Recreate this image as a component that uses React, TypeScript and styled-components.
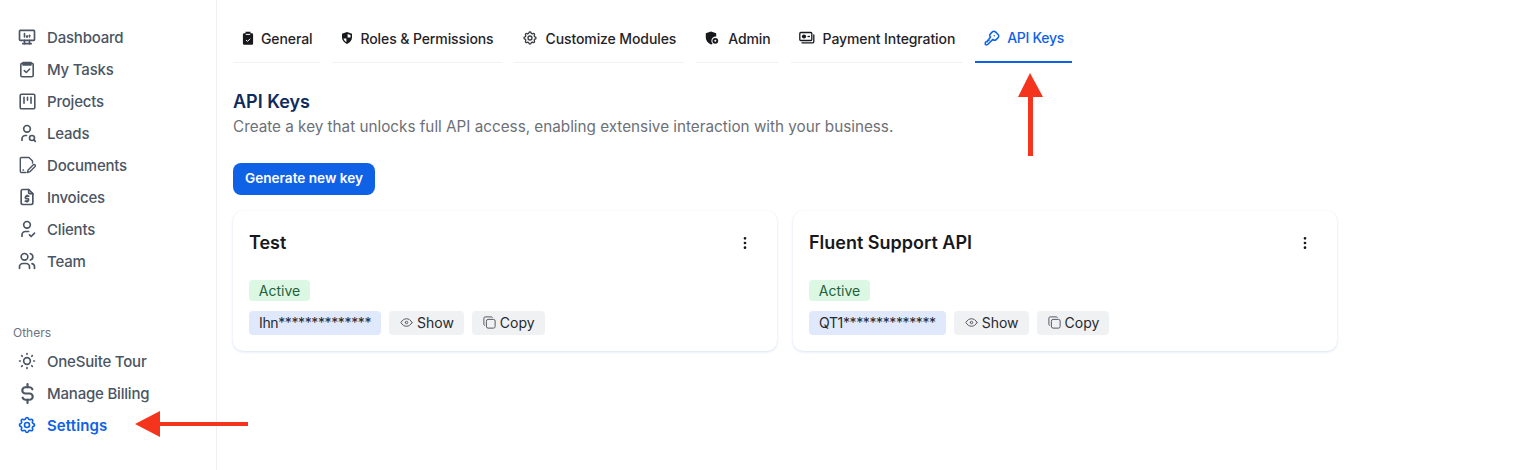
import React from "react";
import styled, { createGlobalStyle } from "styled-components";
import {
  TbDeviceDesktopAnalytics, TbUserSearch, TbFileDollar, TbUserCheck, TbUsers,
  TbSun, TbCurrencyDollar, TbSettings, TbKey, TbEye, TbCopy, TbDotsVertical,
} from "react-icons/tb";

const Global = createGlobalStyle`
  html, body { margin: 0; padding: 0; background: #fff; }
  body { font-family: Inter, "Liberation Sans", sans-serif; -webkit-font-smoothing: antialiased; }
  * { box-sizing: border-box; }
`;

const Page = styled.div`
  position: relative;
  display: flex;
  width: 1518px;
  height: 470px;
  overflow: hidden;
  background: #fff;
`;

const Sidebar = styled.aside`
  width: 217px;
  flex: none;
  border-right: 1px solid #eef0f3;
  padding: 21px 0 0 13px;
  display: flex;
  flex-direction: column;
`;

const NavItem = styled.div<{ $active?: boolean }>`
  height: 32px;
  display: flex;
  align-items: center;
  gap: 10px;
  padding-left: 4px;
  font-size: 15px;
  font-weight: ${(p) => (p.$active ? 600 : 500)};
  letter-spacing: ${(p) => (p.$active ? "0.1px" : "-0.2px")};
  color: ${(p) => (p.$active ? "#0f62e6" : "#4b5563")};
`;

const NavIcon = styled.span`
  width: 20px;
  height: 20px;
  display: flex;
  align-items: center;
  justify-content: center;
  flex: none;
  svg { display: block; flex: none; }
`;

const SectionLabel = styled.div`
  margin-top: 48px;
  height: 16px;
  line-height: 16px;
  margin-bottom: 4px;
  font-size: 12px;
  color: #6b7280;
`;

const Main = styled.main`
  flex: 1;
  padding: 14px 0 0 16px;
`;

const Tabs = styled.div`
  display: flex;
  gap: 12px;
`;

const Tab = styled.div<{ $active?: boolean; $gap: number }>`
  height: 49px;
  display: flex;
  align-items: center;
  gap: ${(p) => p.$gap}px;
  padding: 0 8px;
  font-size: 14px;
  font-weight: 500;
  letter-spacing: ${(p) => (p.$active ? "-0.3px" : "-0.1px")};
  white-space: nowrap;
  color: ${(p) => (p.$active ? "#0f62e6" : "#1f2328")};
  border-bottom: ${(p) => (p.$active ? "2px solid #0f62e6" : "1px solid #f1f2f4")};
  svg { display: block; flex: none; }
`;

const Title = styled.h1`
  margin: 26px 0 0;
  font-size: 18px;
  line-height: 25px;
  font-weight: 600;
  color: #0f2b5b;
`;

const Subtitle = styled.p`
  margin: 0;
  font-size: 15.25px;
  line-height: 25px;
  color: #6d7077;
`;

const PrimaryButton = styled.button`
  display: block;
  margin-top: 24px;
  width: 142px;
  height: 32px;
  border: 0;
  border-radius: 8px;
  background: #0f62e6;
  color: #fff;
  font: 600 13.6px Inter, sans-serif;
  padding: 0 0 2px;
`;

const Cards = styled.div`
  display: flex;
  gap: 16px;
  margin-top: 16px;
`;

const Card = styled.section`
  width: 544px;
  height: 140px;
  padding: 16px;
  border-radius: 10px;
  background: #fff;
  box-shadow: 0 1px 3px rgba(30, 80, 180, 0.16), 0 0 1px rgba(30, 80, 180, 0.06);
`;

const CardHeader = styled.div`
  display: flex;
  align-items: center;
  justify-content: space-between;
  height: 32px;
  color: #18191c;
  svg { display: block; margin-right: 8px; }
`;

const CardTitle = styled.h2`
  margin: 0 0 2px;
  font-size: 18px;
  font-weight: 600;
  color: #18191c;
`;

const Badge = styled.span`
  display: block;
  margin-top: 21px;
  width: 61px;
  height: 21px;
  border-radius: 4px;
  background: #dcf8e5;
  color: #22633b;
  font-size: 14px;
  line-height: 21px;
  text-align: center;
`;

const KeyRow = styled.div`
  display: flex;
  gap: 8px;
  margin-top: 10px;
`;

const Chip = styled.span<{ $key?: boolean }>`
  height: 24px;
  display: inline-flex;
  align-items: center;
  gap: 3px;
  padding: 0 10px 1px;
  border-radius: 4px;
  font-size: 14px;
  letter-spacing: ${(p) => (p.$key ? "-0.38px" : "-0.02px")};
  color: #26292f;
  white-space: nowrap;
  background: ${(p) => (p.$key ? "#e0e8fb" : "#f0f1f3")};
  svg { display: block; flex: none; color: #555b64; }
`;

const Arrow = styled.svg`
  position: absolute;
  pointer-events: none;
`;

const S = { fill: "none", stroke: "currentColor", strokeLinecap: "round" as const, strokeLinejoin: "round" as const };

const TaskIcon = () => (
  <svg width="16" height="17" viewBox="0 0 16 17" {...S} strokeWidth={1.6}>
    <rect x="1.8" y="2.2" width="12.4" height="13.6" rx="1.5" />
    <path d="M4 1.500h8v2.400H4z" fill="currentColor" />
    <path d="M5.300 9.600l2 1.900 3.400-3.500" strokeWidth={1.5} />
  </svg>
);
const KanbanIcon = () => (
  <svg width="17" height="17" viewBox="0 0 17 17" {...S} strokeWidth={1.6}>
    <rect x="1.200" y="1.200" width="14.600" height="14.600" rx="1.400" />
    <path d="M5 4.200v6M8.500 4.200v3M12 4.200v6" />
  </svg>
);
const DocIcon = () => (
  <svg width="18" height="18" viewBox="0 0 18 18" {...S} strokeWidth={1.4}>
    <path d="M8 16.500H3.500a1.200 1.200 0 0 1-1.200-1.200V2.700a1.200 1.200 0 0 1 1.200-1.200h7.500l3.500 3.500v2" />
    <path d="M9.500 16.500l.6-2.600 5.200-5.200a1.300 1.300 0 0 1 1.800 1.800l-5.200 5.200zM5 14h.5" />
  </svg>
);
const GeneralIcon = () => (
  <svg width="14" height="14" viewBox="0 0 14 14">
    <path fill="#17191c" d="M4.500.8h5v1.400h1.300A1.300 1.300 0 0 1 12.100 3.500v8.900a1.300 1.300 0 0 1-1.300 1.300H3.200a1.300 1.300 0 0 1-1.300-1.300V3.500a1.300 1.300 0 0 1 1.300-1.300h1.300z" />
    <path fill="none" stroke="#fff" strokeWidth="1" d="M4.800 3.400h4.400M5 9l1.500 1.400L9.200 7.700" />
  </svg>
);
const ShieldIcon = () => (
  <svg width="14" height="14" viewBox="0 0 14 14">
    <path fill="#17191c" d="M7 1l5 1.700v3.600c0 3.200-2.100 5.500-5 6.700-2.900-1.200-5-3.500-5-6.700V2.700z" />
    <path fill="#fff" d="M7.600 3v3.400h2.900V3.900zM3.500 7.600c.3 1.600 1.500 2.800 2.900 3.500V7.600z" />
  </svg>
);
const AdminIcon = () => (
  <svg width="16" height="16" viewBox="0 0 16 16">
    <path fill="#17191c" d="M7 1.500l5.200 1.800v3.200C9.500 6.300 7.400 8.200 7.400 10.800c0 1.300.5 2.400 1.300 3.100l-1.700.6C4 13.300 1.800 10.900 1.800 7.600V3.300z" />
    <circle cx="11.300" cy="10.800" r="2.900" fill="#17191c" />
    <circle cx="11.300" cy="10.800" r="1" fill="#fff" />
  </svg>
);
const PaymentIcon = () => (
  <svg width="16" height="14" viewBox="0 0 16 14" fill="none" stroke="#17191c">
    <rect x=".8" y="1.500" width="12" height="8" rx="1" strokeWidth="1.300" />
    <circle cx="5" cy="5.500" r="2.100" fill="#17191c" stroke="none" />
    <path d="M14.800 4v6.800a1 1 0 0 1-1 1H3" strokeWidth="1.300" strokeLinecap="round" />
    <path d="M8.500 5.500h2.500" strokeWidth="1.300" />
  </svg>
);

const nav = [
  { label: "Dashboard", icon: <TbDeviceDesktopAnalytics size={20} /> },
  { label: "My Tasks", icon: <TaskIcon /> },
  { label: "Projects", icon: <KanbanIcon /> },
  { label: "Leads", icon: <TbUserSearch size={20} /> },
  { label: "Documents", icon: <DocIcon /> },
  { label: "Invoices", icon: <TbFileDollar size={20} /> },
  { label: "Clients", icon: <TbUserCheck size={20} /> },
  { label: "Team", icon: <TbUsers size={20} /> },
];

const others = [
  { label: "OneSuite Tour", icon: <TbSun size={20} /> },
  { label: "Manage Billing", icon: <TbCurrencyDollar size={25} strokeWidth={2.1} /> },
];

const tabs = [
  { label: "General", gap: 6, icon: <GeneralIcon /> },
  { label: "Roles & Permissions", gap: 6, icon: <ShieldIcon /> },
  { label: "Customize Modules", gap: 8, icon: <TbSettings size={16} color="#3a3d42" /> },
  { label: "Admin", gap: 8, icon: <AdminIcon /> },
  { label: "Payment Integration", gap: 8, icon: <PaymentIcon /> },
];

const keys = [
  { name: "Test", secret: "Ihn**************" },
  { name: "Fluent Support API", secret: "QT1**************" },
];

export default function App() {
  return (
    <Page>
      <Global />
      <Sidebar>
        {nav.map((n) => (
          <NavItem key={n.label}>
            <NavIcon>{n.icon}</NavIcon>
            {n.label}
          </NavItem>
        ))}
        <SectionLabel>Others</SectionLabel>
        {others.map((n) => (
          <NavItem key={n.label}>
            <NavIcon>{n.icon}</NavIcon>
            {n.label}
          </NavItem>
        ))}
        <NavItem $active>
          <NavIcon><TbSettings size={20} /></NavIcon>
          Settings
        </NavItem>
      </Sidebar>
      <Main>
        <Tabs>
          {tabs.map((t) => (
            <Tab key={t.label} $gap={t.gap}>
              {t.icon}
              {t.label}
            </Tab>
          ))}
          <Tab $active $gap={6}>
            <TbKey size={18} />
            API Keys
          </Tab>
        </Tabs>
        <Title>API Keys</Title>
        <Subtitle>Create a key that unlocks full API access, enabling extensive interaction with your business.</Subtitle>
        <PrimaryButton>Generate new key</PrimaryButton>
        <Cards>
          {keys.map((k) => (
            <Card key={k.name}>
              <CardHeader>
                <CardTitle>{k.name}</CardTitle>
                <TbDotsVertical size={16} strokeWidth={2.1} />
              </CardHeader>
              <Badge>Active</Badge>
              <KeyRow>
                <Chip $key>{k.secret}</Chip>
                <Chip><TbEye size={15} strokeWidth={1.6} />Show</Chip>
                <Chip><TbCopy size={15} strokeWidth={1.6} />Copy</Chip>
              </KeyRow>
            </Card>
          ))}
        </Cards>
      </Main>
      <Arrow style={{ left: 1017, top: 72 }} width="28" height="86" viewBox="0 0 28 86">
        <path fill="#f4341c" d="M13 1 26 25H16V84H11V25H1z" />
      </Arrow>
      <Arrow style={{ left: 134, top: 410 }} width="116" height="28" viewBox="0 0 116 28">
        <path fill="#f4341c" d="M1 14 26 1V12H114V16H26V27z" />
      </Arrow>
    </Page>
  );
}
